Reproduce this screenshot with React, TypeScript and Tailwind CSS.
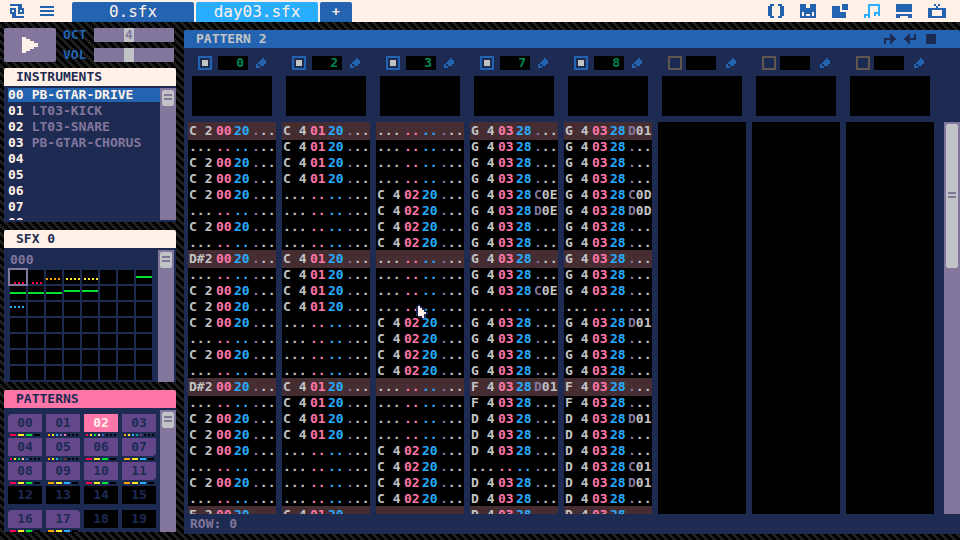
import { useState } from "react";

const HOOKS = ["######.", "....##.", "###.###", "#.#.#.#", "###.###", ".##....", ".######"];
const MENU = [".......", "#######", ".......", "#######", ".......", "#######", "......."];
const PLAY = ["##......", "####....", "######..", "########", "########", "######..", "####....", "##......"];
const PENCIL = ["...#.", "..###", ".####", "#.##.", "##..."];
const REDO = ["...#..", "...##.", "######", "#..##.", "#..#.."];
const UNDO = ["..#..#", ".##..#", "######", ".##...", "..#..."];
const STOP = ["#####", "#####", "#####", "#####", "#####"];
const ARROW_EDGE = [".#....", "#.#...", "#..#..", "#...#.", "#....#", "#...#.", ".##.#."];
const ARROW_FILL = ["......", ".#....", ".##...", ".###..", ".####.", ".###..", "...#.."];

const workspaces = [
  { name: "Code", art: [".##..##.", "##....##", "##....##", "##....##", "##....##", "##....##", ".##..##."] },
  { name: "Sprites", art: ["###..###", "###..###", "########", "########", "#.####.#", "#.#..#.#", "########"] },
  { name: "Map", art: [".....###", "####.###", "####.###", "####....", "#######.", "#######.", "#######."] },
  { name: "Sound", art: ["..######", "..#....#", "..#....#", "..#....#", "..#..###", "###..#.#", "#.#....."], active: true },
  { name: "Desktop", art: ["########", "########", "########", "########", "........", "########", "##....##"] },
  { name: "Output", art: ["...#.#...", "....#....", "#########", "##.....##", "##.....##", "##.....##", "#########"] },
];

const instruments = ["PB-GTAR-DRIVE", "LT03-KICK", "LT03-SNARE", "PB-GTAR-CHORUS", "", "", "", "", ""];

// color, x, y and length of the line in each used slot
const sfxMarks: Record<number, { color: string; x: number; y: number; w: number; dashed: boolean }> = {
  0: { color: "#ff004d", x: 4, y: 13, w: 12, dashed: true },
  1: { color: "#ff004d", x: 4, y: 13, w: 12, dashed: true },
  2: { color: "#ffa300", x: 0, y: 9, w: 16, dashed: true },
  3: { color: "#ffec27", x: 2, y: 9, w: 14, dashed: true },
  4: { color: "#ffec27", x: 2, y: 9, w: 14, dashed: true },
  7: { color: "#00e436", x: 0, y: 7, w: 16, dashed: false },
  8: { color: "#00e436", x: 0, y: 7, w: 16, dashed: false },
  9: { color: "#00e436", x: 0, y: 7, w: 16, dashed: false },
  10: { color: "#00e436", x: 0, y: 7, w: 16, dashed: false },
  11: { color: "#00e436", x: 0, y: 5, w: 16, dashed: false },
  12: { color: "#00e436", x: 0, y: 5, w: 16, dashed: false },
  16: { color: "#29adff", x: 0, y: 5, w: 14, dashed: true },
};

const K = "#000000";
const RYG = ["#ff004d", "#ffec27", "#00e436", K];
const OYB = ["#ffa300", "#ffec27", "#29adff", K];
const RYG8 = ["#ff004d", "#ffec27", "#00e436", "#ffccaa", "#2463b0", K, K, K];

const patterns: { colors: string[]; corner?: string }[] = [
  { colors: RYG, corner: "rounded-tl-sm" },
  { colors: ["#ffa300", "#ffec27", "#29adff", "#83769c", "#ff77a8", K, K, K] },
  { colors: RYG8 },
  { colors: ["#ffa300", "#ffec27", "#29adff", "#00a88a", "#64478b", K, K, K] },
  { colors: RYG8 },
  { colors: ["#ffa300", "#ffec27", "#29adff", "#125359", "#742f29", K, K, K] },
  { colors: RYG },
  { colors: OYB, corner: "rounded-br-sm" },
  { colors: RYG },
  { colors: OYB },
  { colors: RYG },
  { colors: OYB, corner: "rounded-br-sm" },
  { colors: [] },
  { colors: [] },
  { colors: [] },
  { colors: [] },
  { colors: RYG, corner: "rounded-tl-sm" },
  { colors: OYB, corner: "rounded-tr-sm" },
  { colors: [] },
  { colors: [] },
];

// one row per entry: note, instrument, volume, effect ("" is an empty row)
const C2 = "C 2|00|20|...";
const DS2 = "D#2|00|20|...";
const C4 = "C 4|01|20|...";
const S4 = "C 4|02|20|...";
const G4 = "G 4|03|28|...";
const F4 = "F 4|03|28|...";
const D4 = "D 4|03|28|...";

const tracks: { sfx: string; rows: string[] }[] = [
  { sfx: "0", rows: [C2, "", C2, C2, C2, "", C2, "", DS2, "", C2, C2, C2, "", C2, "", DS2, "", C2, C2, C2, "", C2, "", "F 2|00|20|..."] },
  { sfx: "2", rows: [C4, C4, C4, C4, "", "", "", "", C4, C4, C4, C4, "", "", "", "", C4, C4, C4, C4, "", "", "", "", C4] },
  { sfx: "3", rows: ["", "", "", "", S4, S4, S4, S4, "", "", "", "", S4, S4, S4, S4, "", "", "", "", S4, S4, S4, S4, ""] },
  {
    sfx: "7",
    rows: [G4, G4, G4, G4, "G 4|03|28|C0E", "G 4|03|28|D0E", G4, G4, G4, G4, "G 4|03|28|C0E", "", G4, G4, G4, G4, "F 4|03|28|D01", F4, D4, D4, D4, "", D4, D4, D4],
  },
  {
    sfx: "8",
    rows: ["G 4|03|28|D01", G4, G4, G4, "G 4|03|28|C0D", "G 4|03|28|D0D", G4, G4, G4, G4, G4, "", "G 4|03|28|D01", G4, G4, G4, F4, F4, "D 4|03|28|D01", D4, D4, "D 4|03|28|C01", "D 4|03|28|D01", D4, D4],
  },
  { sfx: "", rows: [] },
  { sfx: "", rows: [] },
  { sfx: "", rows: [] },
];

function Pixels({ art, className = "" }: { art: string[]; className?: string }) {
  const w = art[0].length;
  return (
    <svg width={w * 2} height={art.length * 2} viewBox={`0 0 ${w} ${art.length}`} fill="currentColor" shapeRendering="crispEdges" className={`shrink-0 ${className}`} aria-hidden="true">
      {art.flatMap((row, y) => [...row].map((c, x) => (c === "#" ? <rect key={`${x}-${y}`} x={x} y={y} width="1" height="1" /> : null)))}
    </svg>
  );
}

function Backdrop() {
  return (
    <svg className="absolute inset-0 -z-10 h-full w-full" shapeRendering="crispEdges" aria-hidden="true">
      <defs>
        <pattern id="stairs" width="8" height="8" patternUnits="userSpaceOnUse">
          <rect width="8" height="8" fill="#000" />
          <path d="M0 0h2v4h-2zM2 2h2v4h-2zM4 4h2v4h-2zM6 6h2v2h-2zM6 0h2v2h-2z" fill="#1e1e1e" />
        </pattern>
      </defs>
      <rect width="100%" height="100%" fill="url(#stairs)" />
    </svg>
  );
}

function Scrollbar({ thumb = "h-4" }: { thumb?: string }) {
  return (
    <div className="w-4 shrink-0 bg-[#83769c] p-0.5">
      <div className={`flex flex-col items-center justify-center gap-0.5 rounded-xs bg-[#c2c3c7] pb-0.5 ${thumb}`}>
        <span className="h-0.5 w-2 bg-[#83769c]" />
        <span className="h-0.5 w-2 bg-[#83769c]" />
      </div>
    </div>
  );
}

function PanelTitle({ children, className }: { children: React.ReactNode; className: string }) {
  return <h2 className={`h-[18px] shrink-0 rounded-t-xs pl-3 font-bold leading-[18px] ${className}`}>{children}</h2>;
}

function Knob({ label, value, showValue }: { label: string; value: number; showValue?: boolean }) {
  const [v, setV] = useState(value);
  return (
    <label className="flex h-[14px] items-center text-[#2463b0]">
      <span className="w-[31px] font-bold leading-[14px]">{label}</span>
      <span className="relative h-[14px] flex-1">
        <input
          type="range"
          min={1}
          max={8}
          value={v}
          onChange={(e) => setV(Number(e.target.value))}
          className="block h-[14px] w-full appearance-none bg-[#83769c] [&::-webkit-slider-thumb]:h-[14px] [&::-webkit-slider-thumb]:w-[10px] [&::-webkit-slider-thumb]:appearance-none [&::-webkit-slider-thumb]:bg-[#c2c3c7]"
        />
        {showValue && <span className="pointer-events-none absolute top-0 left-[31px] font-bold leading-[14px] text-[#83769c]">{v}</span>}
      </span>
    </label>
  );
}

function TopBar() {
  return (
    <header className="flex h-[22px] shrink-0 items-center bg-[#fff1e8] pr-[14px] pl-[10px] text-[#2463b0]">
      <button aria-label="System"><Pixels art={HOOKS} /></button>
      <button aria-label="Menu" className="ml-4"><Pixels art={MENU} /></button>
      <nav className="ml-[18px] flex h-5 gap-0.5 self-end text-base leading-5 text-[#fff1e8]">
        <button className="w-[122px] rounded-t-xs bg-[#2463b0]">0.sfx</button>
        <button className="w-[122px] rounded-t-xs bg-[#29adff]">day03.sfx</button>
        <button className="w-8 rounded-t-xs bg-[#2463b0] text-[13px] font-bold" aria-label="New tab">+</button>
      </nav>
      <div className="ml-auto flex gap-4">
        {workspaces.map((w) => (
          <button key={w.name} aria-label={w.name} className={w.active ? "text-[#29adff]" : ""}>
            <Pixels art={w.art} />
          </button>
        ))}
      </div>
    </header>
  );
}

function Instruments() {
  return (
    <section className="mb-2 flex h-[154px] shrink-0 flex-col bg-[#1d2b53]">
      <PanelTitle className="bg-[#fff1e8] text-[#1d2b53]">INSTRUMENTS</PanelTitle>
      <div className="flex min-h-0 flex-1 pt-0.5 pb-0.5">
        <ul className="flex-1 overflow-hidden pl-1">
          {instruments.map((name, i) => (
            <li key={i} className="h-4">
              <button className={`flex h-[14px] w-full gap-2 text-left font-bold leading-[14px] text-[#fff1e8] ${i === 0 ? "bg-[#2463b0]" : ""}`}>
                <span>{String(i).padStart(2, "0")}</span>
                <span className={i === 0 ? "" : "text-[#83769c]"}>{name}</span>
              </button>
            </li>
          ))}
        </ul>
        <Scrollbar />
      </div>
    </section>
  );
}

function SfxPanel() {
  return (
    <section className="mb-2 flex h-[152px] shrink-0 flex-col bg-[#1d2b53]">
      <PanelTitle className="bg-[#fff1e8] text-[#1d2b53]">SFX 0</PanelTitle>
      <div className="flex min-h-0 flex-1 justify-between pt-0.5 pr-0.5 pl-[6px]">
        <div>
          <p className="h-5 pt-0.5 font-bold leading-4 text-[#83769c]">000</p>
          <div className="grid grid-cols-8 gap-0.5">
            {Array.from({ length: 56 }, (_, i) => {
              const m = sfxMarks[i];
              return (
                <div key={i} className={`h-[14px] w-4 bg-black ${i === 0 ? "outline-2 outline-[#83769c]" : ""}`}>
                  {m && (
                    <svg width="16" height="14" className="block" shapeRendering="crispEdges">
                      <path d={`M${m.x} ${m.y}h${m.w}`} stroke={m.color} strokeWidth="2" strokeDasharray={m.dashed ? "2 2" : undefined} />
                    </svg>
                  )}
                </div>
              );
            })}
          </div>
        </div>
        <Scrollbar />
      </div>
    </section>
  );
}

function Patterns({ current, onPick }: { current: number; onPick: (n: number) => void }) {
  return (
    <section className="mb-2 flex min-h-0 flex-1 flex-col bg-[#1d2b53]">
      <PanelTitle className="bg-[#ff77a8] text-[#1d2b53]">PATTERNS</PanelTitle>
      <div className="flex min-h-0 flex-1 pt-0.5">
        <div className="grid flex-1 grid-cols-4 content-start gap-x-1 overflow-hidden pt-1 pr-1 pl-1">
          {patterns.map((p, i) => {
            const used = p.colors.length > 0;
            const tone = i === current ? "bg-[#ff77a8] text-[#fff1e8]" : used ? "bg-[#64478b] text-[#1d2b53]" : "bg-black text-[#1d2b53]";
            return (
              <div key={i} className="h-6">
                <button onClick={() => onPick(i)} className={`block h-[18px] w-full font-bold leading-[18px] ${tone} ${p.corner ?? ""}`}>
                  {String(i).padStart(2, "0")}
                </button>
                <div className="flex gap-0.5 pt-0.5 pl-0.5">
                  {p.colors.map((c, j) => (
                    <span key={j} className={`h-0.5 ${p.colors.length === 4 ? "w-1.5" : "w-0.5"}`} style={{ backgroundColor: c }} />
                  ))}
                </div>
              </div>
            );
          })}
        </div>
        <Scrollbar />
      </div>
    </section>
  );
}

function TrackHeader({ sfx, index }: { sfx: string; index: number }) {
  const [on, setOn] = useState(sfx !== "");
  return (
    <div className="pl-1">
      <div className="flex items-center pl-1.5">
        <input
          type="checkbox"
          aria-label={`Track ${index} on`}
          checked={on}
          onChange={(e) => setOn(e.target.checked)}
          className="size-[14px] appearance-none border-2 border-[#5f574f] p-0.5 checked:border-[#2463b0] checked:bg-[#c2c3c7] checked:bg-clip-content"
        />
        <input
          type="text"
          aria-label={`Track ${index} sfx`}
          defaultValue={sfx}
          className={`h-[14px] w-[30px] bg-black pr-1 text-right font-bold leading-[14px] text-[#008751] ${on ? "mr-2 ml-1.5" : "mr-[10px] ml-1"}`}
        />
        <button aria-label={`Edit track ${index}`} className="text-[#2463b0]"><Pixels art={PENCIL} /></button>
      </div>
      <div className="mt-1.5 mr-1 h-10 bg-black" />
    </div>
  );
}

function Track({ rows }: { rows: string[] }) {
  return (
    <div className="overflow-hidden bg-black pt-px">
      <table className="w-full table-fixed border-collapse font-bold leading-4">
        <colgroup>
          <col className="w-[28px]" />
          <col className="w-[18px]" />
          <col className="w-[18px]" />
          <col />
        </colgroup>
        <tbody>
          {rows.map((row, i) => {
            const [note, inst, vol, fx] = (row || "...|..|..|...").split("|");
            return (
              <tr key={i} className={`h-4 ${i % 8 === 0 ? "bg-[#452d32] shadow-[0_-1px_#452d32,0_1px_#452d32]" : ""}`}>
                <td className="p-0 pl-px whitespace-pre text-[#c2c3c7]">{note}</td>
                <td className="p-0 text-[#ff77a8]">{inst}</td>
                <td className="p-0 text-[#29adff]">{vol}</td>
                <td className="p-0 text-[#c2c3c7]">
                  <span className="text-[#83769c]">{fx[0]}</span>
                  {fx.slice(1)}
                </td>
              </tr>
            );
          })}
        </tbody>
      </table>
    </div>
  );
}

function PatternEditor({ current }: { current: number }) {
  return (
    <main className="relative mt-2 mb-1.5 flex min-w-0 flex-1 flex-col bg-[#1d2b53]">
      <div className="flex h-[18px] shrink-0 items-center rounded-t-xs bg-[#2463b0] pr-6 text-[#1d2b53]">
        <h1 className="flex-1 pl-3 font-bold leading-[18px] text-[#c2c3c7]">PATTERN {current}</h1>
        <button aria-label="Loop start"><Pixels art={REDO} /></button>
        <button aria-label="Loop end" className="ml-2"><Pixels art={UNDO} /></button>
        <button aria-label="Stop" className="ml-[10px]"><Pixels art={STOP} /></button>
      </div>
      <div className="mr-[26px] ml-1 grid grid-cols-8 gap-1.5 pt-2 pb-1.5">
        {tracks.map((t, i) => (
          <TrackHeader key={i} sfx={t.sfx} index={i} />
        ))}
      </div>
      <div className="flex min-h-0 flex-1 gap-[10px] pl-1">
        <div className="grid flex-1 grid-cols-8 grid-rows-[minmax(0,1fr)] gap-1.5">
          {tracks.map((t, i) => (
            <Track key={i} rows={t.rows} />
          ))}
        </div>
        <Scrollbar thumb="h-36" />
      </div>
      <footer className="h-5 shrink-0 pl-1.5 font-bold leading-5 text-[#83769c]">ROW: 0</footer>
    </main>
  );
}

function Cursor() {
  return (
    <div className="pointer-events-none absolute top-[304px] left-[416px]">
      <Pixels art={ARROW_EDGE} className="absolute text-[#1d2b53]" />
      <Pixels art={ARROW_FILL} className="absolute text-[#fff1e8]" />
    </div>
  );
}

export default function App() {
  const [current, setCurrent] = useState(2);

  return (
    <div className="relative isolate flex h-screen flex-col overflow-hidden font-['DejaVu_Sans_Mono',monospace] text-[13px]">
      <Backdrop />
      <TopBar />
      <div className="flex min-h-0 flex-1 gap-2 pl-1">
        <aside className="flex w-[172px] shrink-0 flex-col pt-1.5">
          <div className="mb-1.5 flex gap-[7px]">
            <button aria-label="Play" className="flex h-[34px] w-[52px] items-center justify-center rounded-xs bg-[#83769c] text-[#fff1e8]">
              <Pixels art={PLAY} />
            </button>
            <div className="flex flex-1 flex-col justify-between pr-0.5">
              <Knob label="OCT" value={4} showValue />
              <Knob label="VOL" value={4} />
            </div>
          </div>
          <Instruments />
          <SfxPanel />
          <Patterns current={current} onPick={setCurrent} />
        </aside>
        <PatternEditor current={current} />
      </div>
      <Cursor />
    </div>
  );
}
